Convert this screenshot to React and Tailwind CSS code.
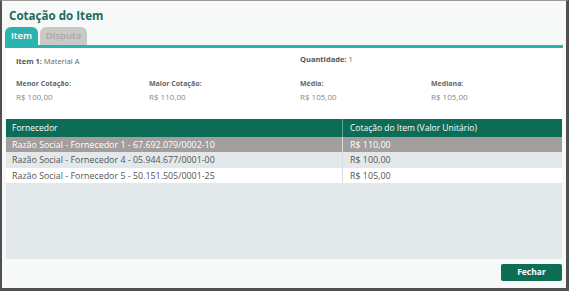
import React from "react";

export default function App() {
  const rows = [
    { f: "Razão Social - Fornecedor 1 - 67.692.079/0002-10", v: "R$ 110,00", bg: "bg-[#a29e9e]", tc: "text-white", h: "h-[15px]" },
    { f: "Razão Social - Fornecedor 4 - 05.944.677/0001-00", v: "R$ 100,00", bg: "bg-[#e3e8ea]", tc: "text-[#555]", h: "h-[16px]" },
    { f: "Razão Social - Fornecedor 5 - 50.151.505/0001-25", v: "R$ 105,00", bg: "bg-white", tc: "text-[#555]", h: "h-[15px]" },
  ];
  const stats = [
    { l: "Menor Cotação:", v: "R$ 100,00", w: "w-[133px]" },
    { l: "Maior Cotação:", v: "R$ 110,00", w: "w-[151px]" },
    { l: "Média:", v: "R$ 105,00", w: "w-[131px]" },
    { l: "Mediana:", v: "R$ 105,00", w: "w-[120px]" },
  ];
  return (
    <div
      className="w-[569px] h-[291px] bg-[#f7f8f8] border-t border-t-[#9a9a9a] border-l-2 border-l-[#505050] border-r-[3px] border-r-[#505050] border-b-[3px] border-b-[#505050] flex flex-col overflow-hidden"
      style={{ fontFamily: '"Open Sans", "Noto Sans", sans-serif' }}
    >
      <div className="h-[26px] pl-[7px] pt-[8px] text-[11.6px] leading-[14px] font-bold text-[#1f6b5b]">
        Cotação do Item
      </div>
      <div className="h-[18px] flex gap-[2px] pl-[3px]">
        <div className="w-[33px] h-full rounded-t-[6px] bg-[#2bb3ae] text-white text-[9.5px] font-semibold flex items-center justify-center">
          Item
        </div>
        <div className="w-[47px] h-full rounded-t-[6px] bg-[#c9c9c9] text-[#a8a8a8] text-[9.5px] font-semibold flex items-center justify-center">
          Disputa
        </div>
      </div>
      <div className="mx-[3px] h-[3px] bg-[#2bb3ae]" />
      <div className="mx-[3px] px-[1px] flex-1 flex flex-col">
        <div className="h-[71px] bg-white pl-[10px] pt-[6px]">
          <div className="flex h-[12px] items-start text-[7.5px] leading-[10px]">
            <div className="w-[284px] pt-[2px] text-[#666]">
              <span className="font-bold text-[#555]">Item 1:</span> Material A
            </div>
            <div className="text-[#666]">
              <span className="font-bold text-[#555]">Quantidade:</span> 1
            </div>
          </div>
          <div className="flex mt-[13px]">
            {stats.map((s) => (
              <div key={s.l} className={s.w}>
                <div className="text-[7px] leading-[10px] font-bold text-[#666]">{s.l}</div>
                <div className="mt-[3px] text-[8px] leading-[10px] text-[#888]">{s.v}</div>
              </div>
            ))}
          </div>
        </div>
        <div className="flex h-[18px] bg-[#0d6c56] text-white text-[8.5px]">
          <div className="w-[336px] pl-[6px] flex items-center">Fornecedor</div>
          <div className="flex-1 border-l border-l-[#5fa694] pl-[7px] flex items-center">
            Cotação do Item (Valor Unitário)
          </div>
        </div>
        {rows.map((r) => (
          <div key={r.f} className={`flex ${r.h} ${r.bg} ${r.tc} text-[8.9px]`}>
            <div className="w-[336px] pl-[6px] flex items-center">{r.f}</div>
            <div className="flex-1 border-l border-l-[#d8dcde] pl-[7px] flex items-center">{r.v}</div>
          </div>
        ))}
        <div className="flex-1 bg-[#e3e8ea]" />
      </div>
      <div className="h-[29px] flex justify-end pt-[5px] pr-[4px]">
        <div className="w-[61px] h-[17px] bg-[#0e6e55] rounded-[2px] text-white text-[8.5px] font-bold flex items-center justify-center">
          Fechar
        </div>
      </div>
    </div>
  );
}
